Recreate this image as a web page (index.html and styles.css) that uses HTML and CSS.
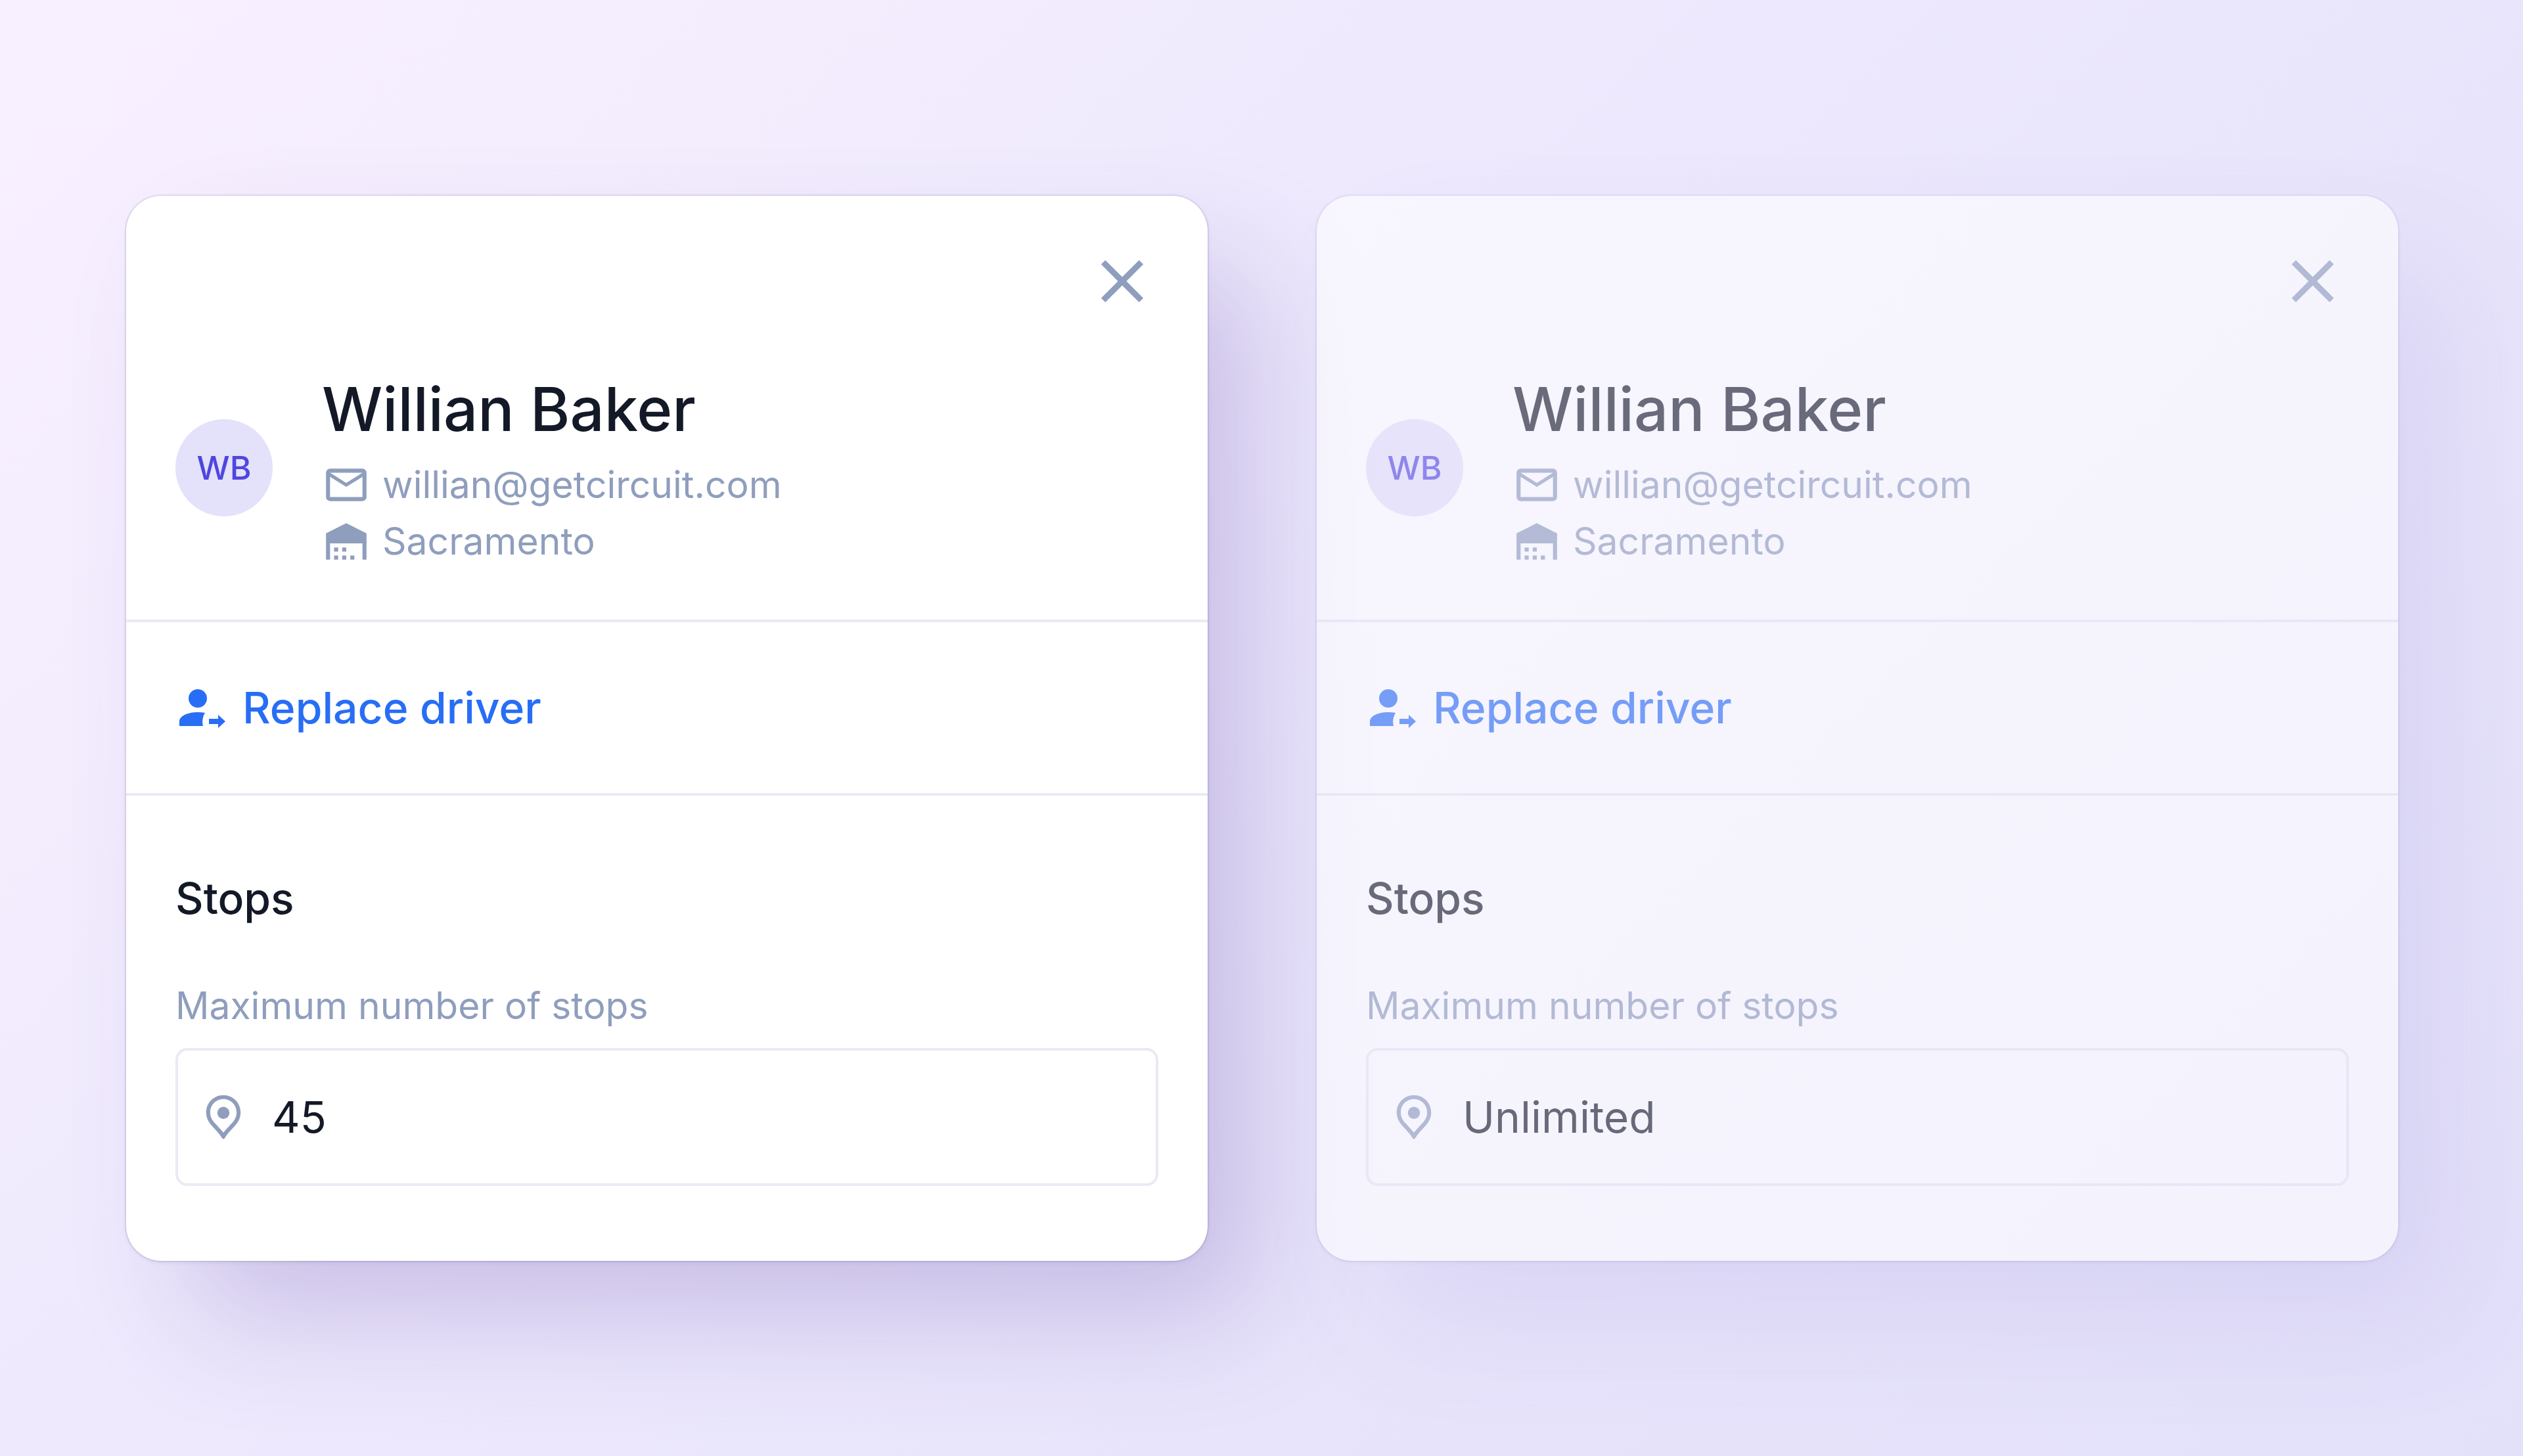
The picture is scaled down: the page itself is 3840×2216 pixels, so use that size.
FILE: index.html
```html
<!DOCTYPE html>
<html lang="en">
<head>
    <meta charset="UTF-8">
    <meta name="viewport" content="width=device-width, initial-scale=1.0">
    <title>Driver details</title>
    <link rel="stylesheet" href="styles.css">
</head>
<body>
    <main class="drivers">
        <section class="card">
            <header class="card-header">
                <button class="close" type="button" aria-label="Close">
                    <svg viewBox="0 0 24 24"><path d="M19 6.4 17.6 5 12 10.6 6.4 5 5 6.4 10.6 12 5 17.6 6.4 19 12 13.4 17.6 19 19 17.6 13.4 12z"/></svg>
                </button>
                <div class="profile">
                    <div class="avatar">WB</div>
                    <div class="info">
                        <h1 class="name">Willian Baker</h1>
                        <p class="detail">
                            <svg viewBox="0 0 24 24"><path d="M20 4H4a2 2 0 0 0-2 2v12a2 2 0 0 0 2 2h16a2 2 0 0 0 2-2V6a2 2 0 0 0-2-2zm0 14H4V8l8 5 8-5zm-8-7L4 6h16z"/></svg>
                            <span>willian@getcircuit.com</span>
                        </p>
                        <p class="detail">
                            <svg viewBox="0 0 24 24"><path d="M12 3 2 8v13h2v-8h16v8h2V8zM6 15h2v2H6zM10 15h2v2h-2zM6 19h2v2H6zM10 19h2v2h-2zM14 19h2v2h-2z"/></svg>
                            <span>Sacramento</span>
                        </p>
                    </div>
                </div>
            </header>
            <div class="actions">
                <button class="replace" type="button">
                    <svg viewBox="0 0 84 84"><circle cx="34" cy="28" r="14"/><path d="M6 70v-7c0-8 12-14 28-14 4 0 8 0 11 1-3 5-5 12-3 20zM51 59h14v-6l11 10-11 10v-6H51z"/></svg>
                    <span>Replace driver</span>
                </button>
            </div>
            <div class="stops">
                <h2 class="stops-title">Stops</h2>
                <label class="stops-label" for="stops-limited">Maximum number of stops</label>
                <div class="field">
                    <svg viewBox="0 0 24 24"><path fill-rule="evenodd" d="M12 1.2c-4.7 0-8.5 3.8-8.5 8.5 0 2.6 1 4.5 2.6 6.4 1.7 1.9 3.7 3.7 5.2 6.3q.7 1 1.4 0c1.5-2.6 3.5-4.4 5.2-6.3 1.6-1.9 2.6-3.8 2.6-6.4 0-4.7-3.8-8.5-8.5-8.5zm0 2c3.6 0 6.5 2.9 6.5 6.5 0 2-.7 3.5-2.1 5.1-1.4 1.6-3 3-4.4 4.9-1.4-1.9-3-3.3-4.4-4.9-1.4-1.6-2.1-3.1-2.1-5.1 0-3.6 2.9-6.5 6.5-6.5z"/><circle cx="12" cy="10" r="3"/></svg>
                    <input type="text" id="stops-limited" value="45">
                </div>
            </div>
        </section>

        <section class="card faded">
            <header class="card-header">
                <button class="close" type="button" aria-label="Close">
                    <svg viewBox="0 0 24 24"><path d="M19 6.4 17.6 5 12 10.6 6.4 5 5 6.4 10.6 12 5 17.6 6.4 19 12 13.4 17.6 19 19 17.6 13.4 12z"/></svg>
                </button>
                <div class="profile">
                    <div class="avatar">WB</div>
                    <div class="info">
                        <h1 class="name">Willian Baker</h1>
                        <p class="detail">
                            <svg viewBox="0 0 24 24"><path d="M20 4H4a2 2 0 0 0-2 2v12a2 2 0 0 0 2 2h16a2 2 0 0 0 2-2V6a2 2 0 0 0-2-2zm0 14H4V8l8 5 8-5zm-8-7L4 6h16z"/></svg>
                            <span>willian@getcircuit.com</span>
                        </p>
                        <p class="detail">
                            <svg viewBox="0 0 24 24"><path d="M12 3 2 8v13h2v-8h16v8h2V8zM6 15h2v2H6zM10 15h2v2h-2zM6 19h2v2H6zM10 19h2v2h-2zM14 19h2v2h-2z"/></svg>
                            <span>Sacramento</span>
                        </p>
                    </div>
                </div>
            </header>
            <div class="actions">
                <button class="replace" type="button">
                    <svg viewBox="0 0 84 84"><circle cx="34" cy="28" r="14"/><path d="M6 70v-7c0-8 12-14 28-14 4 0 8 0 11 1-3 5-5 12-3 20zM51 59h14v-6l11 10-11 10v-6H51z"/></svg>
                    <span>Replace driver</span>
                </button>
            </div>
            <div class="stops">
                <h2 class="stops-title">Stops</h2>
                <label class="stops-label" for="stops-unlimited">Maximum number of stops</label>
                <div class="field">
                    <svg viewBox="0 0 24 24"><path fill-rule="evenodd" d="M12 1.2c-4.7 0-8.5 3.8-8.5 8.5 0 2.6 1 4.5 2.6 6.4 1.7 1.9 3.7 3.7 5.2 6.3q.7 1 1.4 0c1.5-2.6 3.5-4.4 5.2-6.3 1.6-1.9 2.6-3.8 2.6-6.4 0-4.7-3.8-8.5-8.5-8.5zm0 2c3.6 0 6.5 2.9 6.5 6.5 0 2-.7 3.5-2.1 5.1-1.4 1.6-3 3-4.4 4.9-1.4-1.9-3-3.3-4.4-4.9-1.4-1.6-2.1-3.1-2.1-5.1 0-3.6 2.9-6.5 6.5-6.5z"/><circle cx="12" cy="10" r="3"/></svg>
                    <input type="text" id="stops-unlimited" value="Unlimited">
                </div>
            </div>
        </section>
    </main>
</body>
</html>
```
FILE: styles.css
```css
* {
    box-sizing: border-box;
}
body {
    margin: 0;
    min-height: 100vh;
    display: flex;
    align-items: center;
    font-family: Inter, "Liberation Sans", sans-serif;
    color: #131926;
    background: linear-gradient(135deg, #f8f0ff 0%, #f4edfe 20%, #eee9fd 38%, #e8e4fb 68%, #e3e0fa 100%);
}
svg {
    display: block;
    fill: currentColor;
    flex: none;
}
h1, h2, p {
    margin: 0;
    font-weight: 500;
}
button, input {
    font: inherit;
    color: inherit;
    background: none;
    border: none;
    padding: 0;
}
button {
    cursor: pointer;
}
.drivers {
    flex: 1;
    display: flex;
    gap: 166px;
    padding: 80px 190px 80px 192px;
}
.card {
    flex: 1;
    min-width: 0;
    background: #fff;
    border-radius: 54px;
    box-shadow: 0 0 0 2px rgba(80, 70, 130, 0.1), 0 2px 6px rgba(80, 70, 130, 0.12), 85px 95px 180px -20px rgba(90, 65, 165, 0.25);
}
.faded {
    opacity: 0.6;
    box-shadow: 0 0 0 2px rgba(80, 70, 130, 0.1), 0 2px 6px rgba(80, 70, 130, 0.12), 85px 95px 180px -20px rgba(90, 80, 190, 0.17);
}
.card-header {
    display: flex;
    flex-direction: column;
    gap: 80px;
    padding: 75px 75px 82px;
    border-bottom: 4px solid #e8ebf5;
}
.close {
    align-self: flex-end;
    color: #8f9ebd;
}
.close svg {
    width: 110px;
    height: 110px;
}
.profile {
    display: flex;
    align-items: center;
    gap: 75px;
}
.avatar {
    width: 148px;
    height: 148px;
    border-radius: 50%;
    display: flex;
    align-items: center;
    justify-content: center;
    flex: none;
    font-size: 50px;
    font-weight: 500;
    color: #4f46e0;
    background: #e4e1fa;
}
.name {
    font-size: 92px;
    line-height: 120px;
    margin-bottom: 18px;
}
.detail {
    display: flex;
    align-items: center;
    gap: 18px;
    font-size: 57px;
    font-weight: 400;
    line-height: 74px;
    color: #8f9ebd;
}
.detail + .detail {
    margin-top: 12px;
}
.detail svg {
    width: 74px;
    height: 74px;
}
.actions {
    padding: 88px 75px;
    border-bottom: 4px solid #e8ebf5;
}
.replace {
    display: flex;
    align-items: center;
    gap: 18px;
    font-size: 66px;
    font-weight: 500;
    line-height: 84px;
    color: #286ef5;
}
.replace svg {
    width: 84px;
    height: 84px;
}
.stops {
    padding: 114px 75px;
}
.stops-title {
    font-size: 66px;
    line-height: 84px;
    margin-bottom: 82px;
}
.stops-label {
    display: block;
    font-size: 57px;
    line-height: 80px;
    margin-bottom: 24px;
    color: #8f9ebd;
}
.field {
    display: flex;
    align-items: center;
    gap: 37px;
    height: 210px;
    padding: 0 32px;
    border: 4px solid #e8ebf5;
    border-radius: 18px;
}
.field svg {
    width: 74px;
    height: 74px;
    color: #8f9ebd;
}
.field input {
    flex: 1;
    min-width: 0;
    height: 100%;
    font-size: 66px;
    outline: none;
}
```
